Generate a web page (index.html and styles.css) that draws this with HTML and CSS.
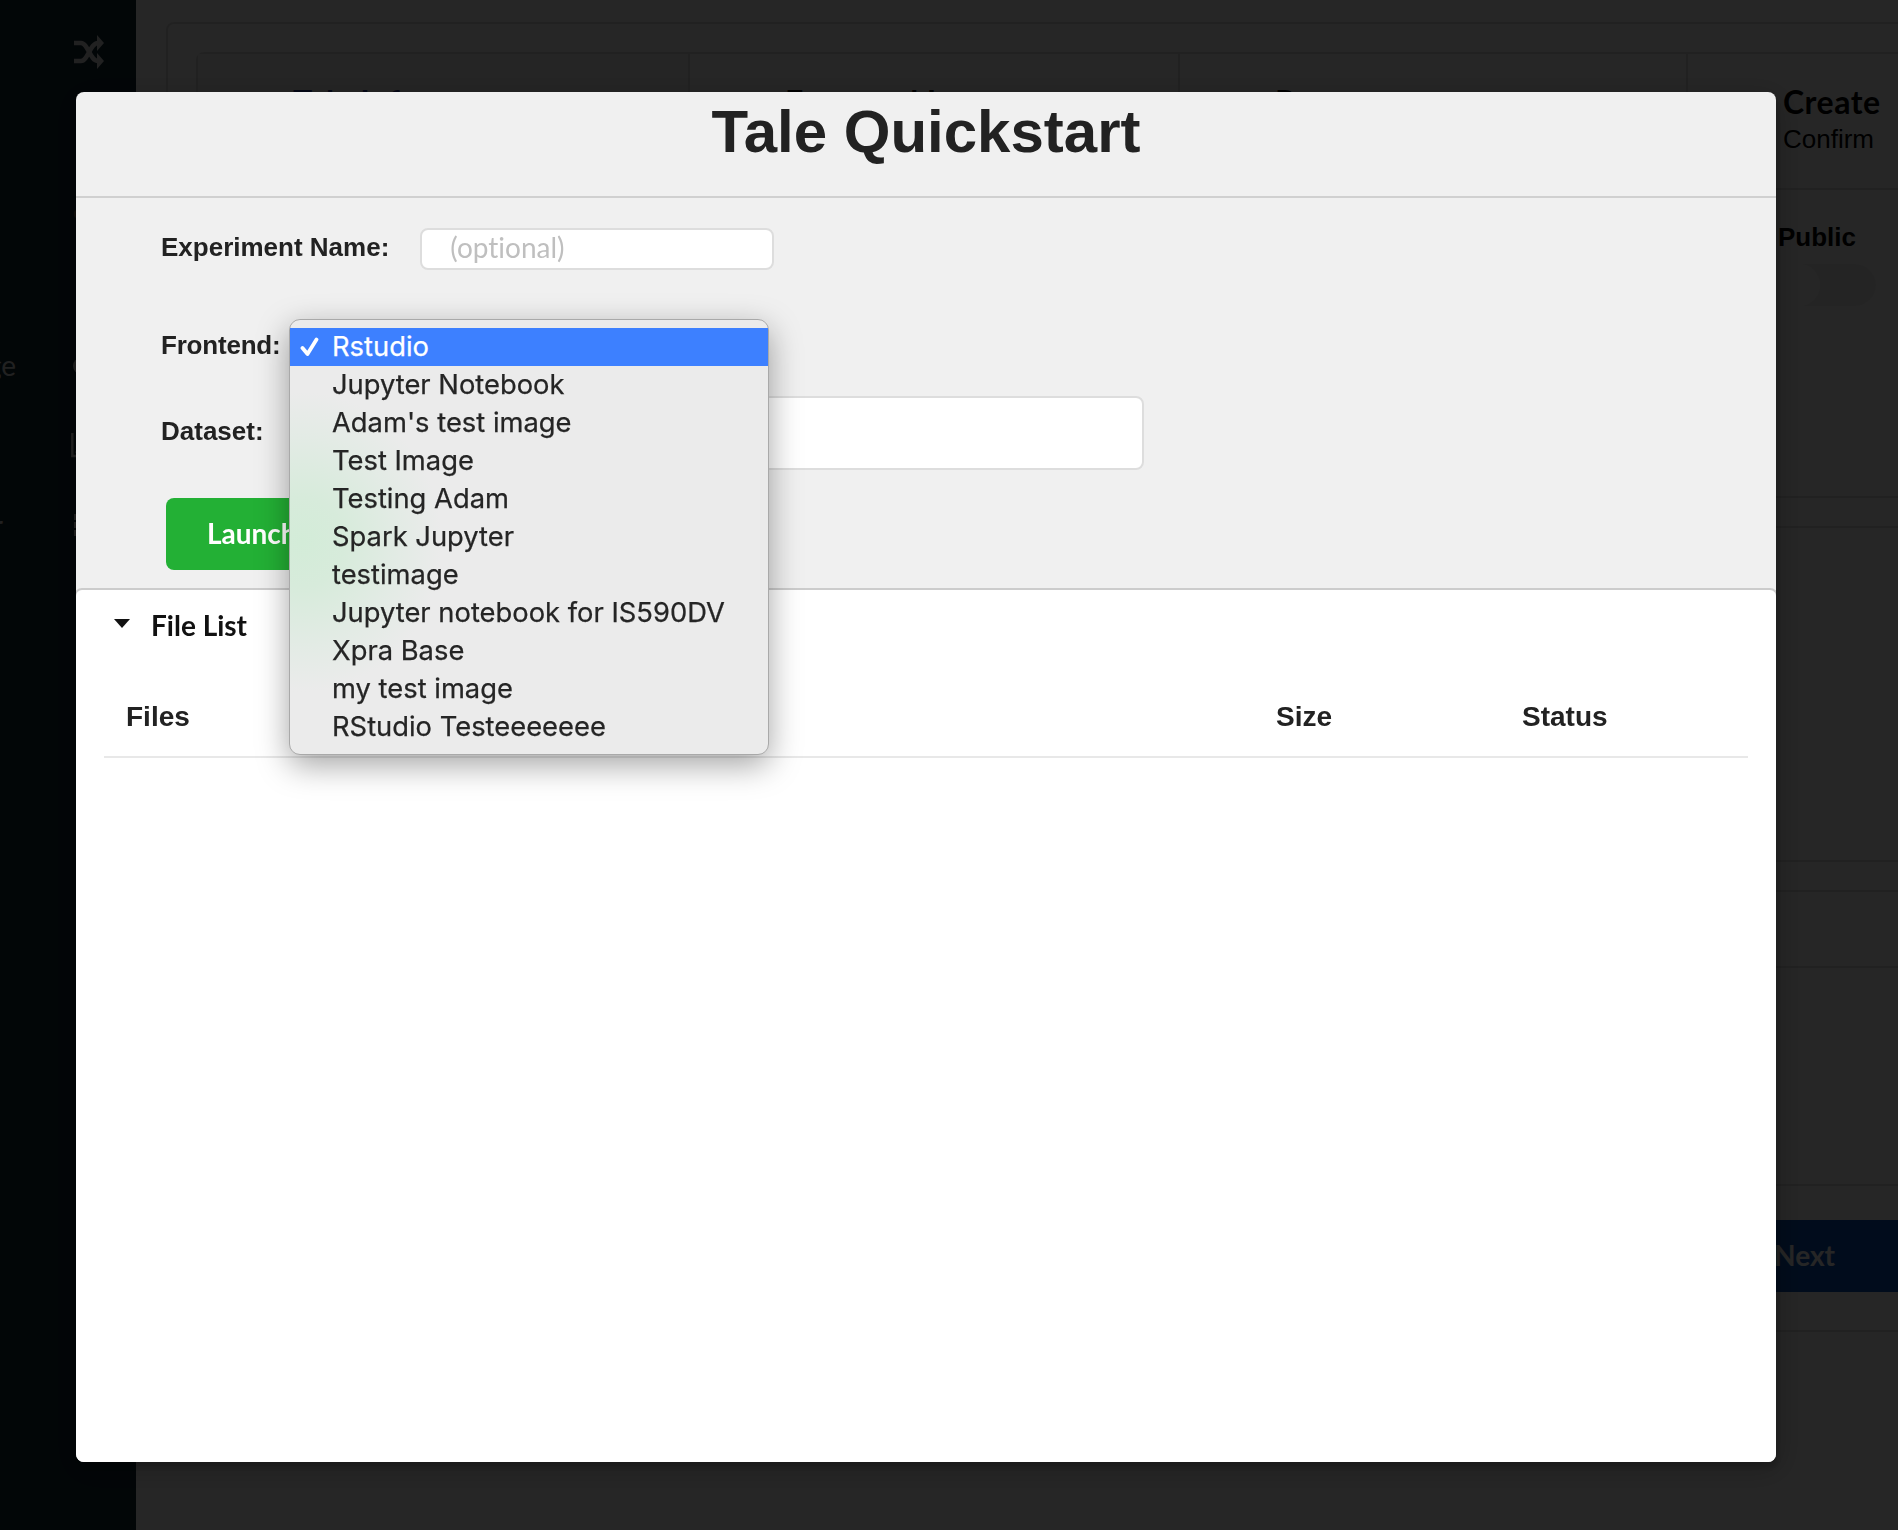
FILE: index.html
```html
<!DOCTYPE html>
<html lang="en">
<head>
<meta charset="utf-8">
<title>Tale Quickstart</title>
<link rel="stylesheet" href="styles.css">
</head>
<body>
<div class="page">
  <nav class="sidebar">
    <div class="nav-item"><span class="nav-label"></span>
      <svg class="nav-icon" viewBox="0 0 30 34"><path d="M0 8h7c7 0 9 18 17 18M0 26h7c7 0 9-18 17-18" fill="none" stroke="currentColor" stroke-width="4.6"/><path d="M23 0l7 8-7 8zM23 18l7 8-7 8z" fill="currentColor"/></svg></div>
    <div class="nav-item nav-item-muted"><span class="nav-label"></span>
      <svg class="nav-icon" viewBox="0 0 30 34"><rect x="0" y="13" width="8" height="8" rx="3" fill="currentColor"/></svg></div>
    <div class="nav-item"><span class="nav-label">ge</span>
      <svg class="nav-icon" viewBox="0 0 30 34"><circle cx="7" cy="18" r="8" fill="currentColor"/></svg></div>
    <div class="nav-item"><span class="nav-label"></span>
      <svg class="nav-icon" viewBox="0 0 30 34"><path d="M-1.700 4v23h25M2 24l7-9" fill="none" stroke="currentColor" stroke-width="2.400"/></svg></div>
    <div class="nav-item"><span class="nav-label nav-label-tail">r</span>
      <svg class="nav-icon" viewBox="0 0 30 34"><path d="M0 6h5v6h-5zM0 14h5v6h-5zM0 22h5v6h-5zM8 6h20v6h-20zM8 14h20v6h-20zM8 22h20v6h-20z" fill="currentColor"/></svg></div>
  </nav>
  <main class="content">
    <section class="wizard">
      <div class="steps">
        <div class="step step-active"><b>Tale Info</b></div>
        <div class="step"><b>Frontend Image</b></div>
        <div class="step"><b>Resources</b></div>
        <div class="step"><b>Create</b><span>Confirm</span></div>
      </div>
      <div class="panel panel-attached">
        <div class="visibility"><label>Public</label><div class="toggle"><i></i></div></div>
      </div>
      <div class="panel panel-middle"></div>
      <div class="panel panel-last"><div class="panel-head"></div></div>
      <div class="next">Next</div>
    </section>
  </main>
</div>
<div class="dimmer">
  <div class="modal">
    <header class="modal-header">Tale Quickstart</header>
    <form class="form">
      <div class="row"><label>Experiment Name:</label><div class="input name-input">(optional)</div></div>
      <div class="row row-frontend"><label>Frontend:</label>
        <div class="select">
          <ul class="menu">
            <li class="selected"><svg class="check" viewBox="0 0 20 20"><path d="M2.500 11l5 6L16.500 2.500" fill="none" stroke="currentColor" stroke-width="3.800" stroke-linecap="round" stroke-linejoin="round"/></svg>Rstudio</li>
            <li>Jupyter Notebook</li>
            <li>Adam's test image</li>
            <li>Test Image</li>
            <li>Testing Adam</li>
            <li>Spark Jupyter</li>
            <li>testimage</li>
            <li>Jupyter notebook for IS590DV</li>
            <li>Xpra Base</li>
            <li>my test image</li>
            <li>RStudio Testeeeeeee</li>
          </ul>
        </div>
      </div>
      <div class="row row-dataset"><label>Dataset:</label><div class="input dataset-input"></div></div>
      <div class="launch">Launch</div>
    </form>
    <section class="files">
      <div class="files-title"><svg class="caret" viewBox="0 0 16 9"><path d="M0 0h16l-8 9z" fill="currentColor"/></svg>File List</div>
      <div class="files-head"><span>Files</span><span>Size</span><span>Status</span></div>
    </section>
  </div>
</div>
</body>
</html>
```

FILE: styles.css
```css
* { box-sizing: border-box; }
body { margin: 0; overflow: hidden; font: 26px/30px "Liberation Sans", Arial, sans-serif; font-variant-ligatures: none; color: #222; }
.page { display: flex; width: 1898px; height: 1530px; overflow: hidden; background: #fff; }

.sidebar { flex: 0 0 136px; display: grid; grid-template-rows: 104px 220px 81px 81px 78px; align-content: start; overflow: hidden; background: #0f2833; color: #dcdcdc; font: 28px/34px Lato, sans-serif; font-variant-ligatures: none; }
.nav-item { display: flex; align-items: center; gap: 58px; }
.nav-item-muted { color: #6b5b4b; }
.nav-label { display: flex; justify-content: flex-end; width: 16px; white-space: nowrap; }
.nav-label-tail { width: 3px; margin-right: 13px; }
.nav-icon { width: 30px; height: 34px; flex: none; overflow: visible; }

.content { flex: none; width: 1900px; padding: 22px 0 0 30px; }
.wizard { height: 1310px; padding: 28px; border: 2px solid #dedede; border-radius: 8px; }
.steps { display: grid; grid-template-columns: 492px 490px 508px 1fr; height: 138px; border: 2px solid #dedede; border-radius: 8px 8px 0 0; }
.step { display: flex; flex-direction: column; justify-content: center; padding: 0 0 2px 95px; border-right: 2px solid #dedede; line-height: 36px; color: #000; }
.step:not(:last-child) { justify-content: flex-start; padding-top: 29px; }
.step b { font: bold 32px/38px Lato, sans-serif; letter-spacing: .5px; }
.step-active { background: #f3f4f5; }
.step-active b { color: #1c2c8f; }
.panel { border: 2px solid #dedede; }
.panel-attached { height: 308px; padding: 32px 0 0 1580px; border-top: 0; }
.visibility label { display: block; line-height: 30px; font-weight: bold; color: #000; }
.toggle { width: 98px; height: 42px; margin-top: 12px; border-radius: 21px; background: #f2f2f2; }
.toggle i { display: block; width: 42px; height: 42px; border-radius: 21px; background: #fff; }
.panel-middle { height: 336px; margin-top: 28px; }
.panel-last { height: 296px; margin-top: 28px; }
.panel-head { height: 76px; border-bottom: 2px solid #dedede; }
.next { height: 72px; margin: 34px 0 0 1520px; padding-left: 58px; background: #0a52b8; color: #fff; font: bold 28px/70px Lato, sans-serif; }

.dimmer { position: fixed; inset: 0; padding: 92px 0 0 76px; background: rgba(0, 0, 0, .85); }
.modal { width: 1700px; height: 1370px; display: flex; flex-direction: column; overflow: hidden; border-radius: 8px; background: #f0f0f0; box-shadow: 2px 6px 6px 0 rgba(0, 0, 0, .2), 2px 6px 30px 4px rgba(0, 0, 0, .2); }
.modal-header { height: 106px; border-bottom: 2px solid #d0d0d0; text-align: center; font-size: 60px; font-weight: bold; line-height: 80px; }
.form { height: 390px; padding: 30px 0 0 85px; }
.row { display: flex; height: 42px; }
.row label { font-weight: bold; line-height: 38px; }
.input { border: 2px solid #ddd; border-radius: 8px; background: #fff; }
.name-input { width: 354px; margin-left: 31px; padding-left: 28px; color: #bfbfbf; font: 28px/34px Lato, sans-serif; font-variant-ligatures: none; }
.row-frontend { margin-top: 54px; }
.row-frontend label { width: 129px; line-height: 42px; letter-spacing: -.2px; }
.select { position: relative; width: 478px; }
.row-dataset { height: 74px; margin-top: 30px; }
.row-dataset label { width: 129px; line-height: 70px; }
.dataset-input { width: 854px; }
.launch { width: 170px; height: 72px; margin: 28px 0 0 5px; padding-left: 41px; border-radius: 8px; background: #23b035; color: #fff; font: bold 28px/70px Lato, sans-serif; }

.menu { position: absolute; z-index: 1; top: -5px; left: -1px; width: 480px; margin: 0; padding: 8px 0; list-style: none; border: 1px solid #a9a9a9; border-radius: 11px; background: radial-gradient(ellipse 140px 150px at 12px 222px, #d3ecd8 0%, #d7ebdb 30%, #e3ebe5 70%, #ebebeb 100%) #ebebeb; box-shadow: 0 10px 32px rgba(0, 0, 0, .36); font: 27.35px/38px Inter, sans-serif; color: #252525; -webkit-text-stroke: .25px; }
.menu li { position: relative; height: 38px; padding-left: 42px; white-space: nowrap; }
.menu .selected { background: #3d80ff; color: #fff; }
.check { position: absolute; left: 10px; top: 9px; width: 20px; height: 20px; }

.files { flex: 1; margin: 0 -2px; padding: 17px 30px 0; border: 2px solid #ccc; border-bottom: 0; border-radius: 8px 8px 0 0; background: #fff; }
.files-title { display: flex; align-items: center; gap: 21px; padding-left: 8px; color: #111; font: bold 28px/36px Lato, sans-serif; font-variant-ligatures: none; }
.caret { width: 16px; height: 9px; margin-top: -4px; }
.files-head { display: grid; grid-template-columns: 1150px 246px 1fr; height: 115px; margin: 0 -2px; padding: 57px 0 0 22px; border-bottom: 2px solid #e8e8e8; font-size: 28px; font-weight: bold; line-height: 34px; }
```
